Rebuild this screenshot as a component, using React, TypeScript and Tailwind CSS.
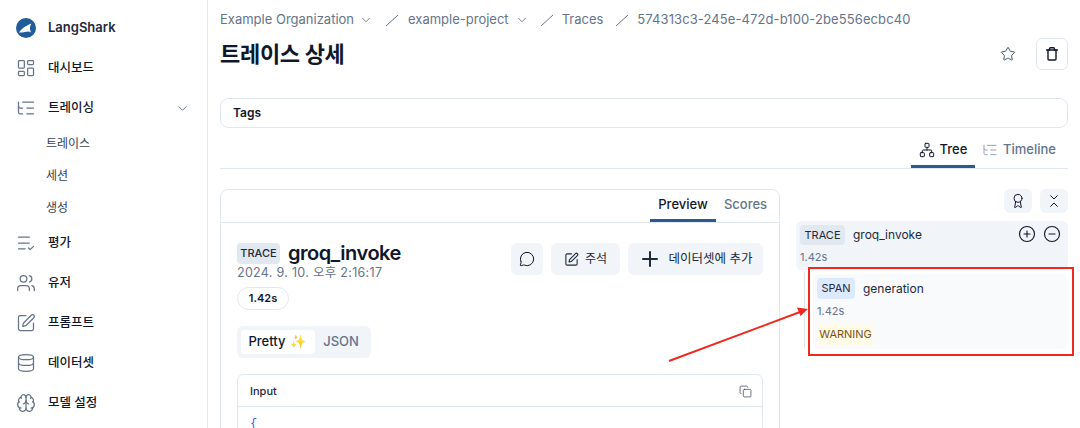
import { ChevronDown, LayoutDashboard, ListTree, ListCheck, Users, SquarePen, Database, Brain, Star, Network, Award, ChevronsDownUp, MessageCircle, Plus, Copy, CirclePlus, CircleMinus } from "lucide-react";

const font = { fontFamily: 'Inter, "Noto Sans CJK KR", sans-serif' };

function NavRow({ icon: Icon, label, right }: { icon: any; label: string; right?: boolean }) {
  return (
    <div className="h-10 flex items-center pl-4 pr-[17px] gap-3 text-[12.5px] font-medium text-[#0f172a]">
      <Icon size={20} strokeWidth={1.5} className="text-[#64748b] shrink-0" />
      <span className="flex-1">{label}</span>
      {right && <ChevronDown size={15} strokeWidth={1.5} className="text-[#64748b]" />}
    </div>
  );
}

function SubRow({ label }: { label: string }) {
  return <div className="h-8 flex items-center pl-[46px] text-xs text-[#334155]">{label}</div>;
}

function Sep() {
  return (
    <svg width="16" height="16" viewBox="0 0 16 16" className="text-[#64748b] shrink-0">
      <path d="M2 14 L14 3" stroke="currentColor" strokeWidth="1" />
    </svg>
  );
}

function Trash2Plain() {
  return (
    <svg width="16" height="16" viewBox="0 0 16 16" fill="none" stroke="#0f172a" strokeWidth="1.4" strokeLinecap="round" strokeLinejoin="round">
      <path d="M2.5 4 H13.5" />
      <path d="M4 4 V13 A1 1 0 0 0 5 14 H11 A1 1 0 0 0 12 13 V4" />
      <path d="M5.5 4 V2.7 A1 1 0 0 1 6.5 1.7 H9.5 A1 1 0 0 1 10.5 2.7 V4" />
    </svg>
  );
}

export default function App() {
  return (
    <div style={font} className="relative w-[1080px] h-[428px] overflow-hidden bg-white flex text-[#0f172a]">
      <aside className="w-[208px] shrink-0 border-r border-[#e2e8f0] pt-2">
        <div className="h-10 flex items-center pl-4 gap-3">
          <svg width="20" height="20" viewBox="0 0 20 20" className="shrink-0">
            <circle cx="10" cy="10" r="10" fill="#1f5c99" />
            <path d="M3 14.5 C5.5 11 8 8.5 15.5 5.5 C13.5 8 13.5 11 15 14.5 C13 13 11 13.5 9 14 C7 14.5 5 14.5 3 14.5 Z" fill="#ffffff" />
          </svg>
          <span className="text-[13px] font-semibold text-[#1e293b]">LangShark</span>
        </div>
        <NavRow icon={LayoutDashboard} label="대시보드" />
        <NavRow icon={ListTree} label="트레이싱" right />
        <SubRow label="트레이스" />
        <SubRow label="세션" />
        <SubRow label="생성" />
        <div className="mt-[-1px]">
          <NavRow icon={ListCheck} label="평가" />
          <NavRow icon={Users} label="유저" />
          <NavRow icon={SquarePen} label="프롬프트" />
          <NavRow icon={Database} label="데이터셋" />
          <NavRow icon={Brain} label="모델 설정" />
        </div>
      </aside>

      <main className="flex-1 min-w-0 pl-3 pr-3">
        <div className="h-[38px] flex items-center pt-[1px] text-[13px] text-[#64748b] whitespace-nowrap">
          <span>Example Organization</span>
          <ChevronDown size={14} strokeWidth={1.5} className="ml-[5px]" />
          <span className="ml-[11px]"><Sep /></span>
          <span className="ml-[8px]">example-project</span>
          <ChevronDown size={14} strokeWidth={1.5} className="ml-[6px]" />
          <span className="ml-[10px]"><Sep /></span>
          <span className="ml-[7px]">Traces</span>
          <span className="ml-[11px]"><Sep /></span>
          <span className="ml-[7px] tracking-[0.1px]">574313c3-245e-472d-b100-2be556ecbc40</span>
        </div>
        <div className="h-8 flex items-center justify-between">
          <h1 className="text-[22px] font-bold tracking-[-0.3px] text-[#0f172a]">트레이스 상세</h1>
          <div className="flex items-center gap-5">
            <Star size={16} strokeWidth={1.5} className="text-[#475569]" />
            <div className="w-8 h-8 border border-[#e2e8f0] rounded-md flex items-center justify-center">
              <Trash2Plain />
            </div>
          </div>
        </div>
        <div className="mt-7 h-[30px] border border-[#e2e8f0] rounded-lg flex items-center pl-3 text-xs font-semibold text-[#0f172a]">Tags</div>
        <div className="h-[41px] border-b border-[#e2e8f0] flex justify-end pr-[5px]">
          <div className="h-[40px] w-16 border-b-[3px] border-[#2c5a8f] flex items-center justify-center gap-[5px] text-[13px] font-medium text-[#0f172a] pt-[7px]">
            <Network size={16} strokeWidth={1.5} />
            <span>Tree</span>
          </div>
          <div className="h-[40px] w-[88px] flex items-center justify-center gap-[5px] text-[13px] font-medium text-[#64748b] pt-[7px] pb-[3px]">
            <ListTree size={16} strokeWidth={1.5} className="text-[#94a3b8]" />
            <span>Timeline</span>
          </div>
        </div>

        <div className="mt-5 flex gap-4">
          <section className="w-[560px] h-[300px] shrink-0 border border-[#e2e8f0] rounded-t-lg">
            <div className="h-[33px] border-b border-[#e2e8f0] flex justify-end pr-[4px] text-[13px] font-medium">
              <div className="w-[66px] h-[32px] border-b-[3px] border-[#2c5a8f] flex items-center justify-center text-[#0f172a]">Preview</div>
              <div className="w-[59px] h-[32px] pb-[3px] flex items-center justify-center text-[#64748b]">Scores</div>
            </div>
            <div className="px-4 pt-5">
              <div className="flex justify-between">
                <div>
                  <div className="flex items-center gap-[8px] h-[20px]">
                    <span className="h-[21px] px-1 w-[43px] rounded bg-[#e2e8f0] flex items-center justify-center text-[11px] text-[#1e293b] font-medium">TRACE</span>
                    <span className="text-[20px] font-semibold tracking-[-0.45px] leading-none text-[#0f172a]">groq_invoke</span>
                  </div>
                  <div className="mt-[2px] h-[16px] flex items-center text-[12.5px] text-[#64748b] tracking-[0.3px]">2024. 9. 10. 오후 2:16:17</div>
                  <div className="mt-[6px] w-[52px] h-[23px] border border-[#e2e8f0] rounded-full flex items-center justify-center text-[11px] font-semibold text-[#0f172a]">1.42s</div>
                </div>
                <div className="flex items-start gap-2">
                  <div className="w-8 h-8 rounded-md bg-[#f1f5f9] flex items-center justify-center">
                    <MessageCircle size={16} strokeWidth={1.5} />
                  </div>
                  <div className="w-[69px] h-8 rounded-md bg-[#f1f5f9] flex items-center justify-center gap-[6px] text-xs text-[#1e293b]">
                    <SquarePen size={15} strokeWidth={1.75} />
                    <span>주석</span>
                  </div>
                  <div className="w-[135px] h-8 rounded-md bg-[#f1f5f9] flex items-center justify-center gap-[6px] text-[12.5px] text-[#1e293b]">
                    <Plus size={24} strokeWidth={2} />
                    <span>데이터셋에 추가</span>
                  </div>
                </div>
              </div>
              <div className="mt-4 w-[134px] h-8 rounded-md bg-[#f1f5f9] p-1 flex items-center text-[13px] font-medium">
                <div className="w-[74px] h-6 rounded bg-white flex items-center justify-center gap-1 pr-[2px] text-[#0f172a]">Pretty <span>✨</span></div>
                <div className="flex-1 flex items-center justify-center text-[#64748b]">JSON</div>
              </div>
              <div className="mt-4 border border-[#e2e8f0] rounded-t-md h-[80px]">
                <div className="h-8 pt-[1px] border-b border-[#e2e8f0] flex items-center justify-between pl-3 pr-[10px] text-[11px] font-medium text-[#1e293b]">
                  <span>Input</span>
                  <Copy size={13} strokeWidth={1.5} className="text-[#475569]" />
                </div>
                <div className="pl-3 pt-[9px] text-xs font-mono text-[#2563eb] leading-4">{"{"}</div>
              </div>
            </div>
          </section>

          <section className="flex-1 min-w-0">
            <div className="flex justify-end gap-2">
              <div className="w-7 h-6 rounded-md bg-[#f1f5f9] flex items-center justify-center">
                <Award size={16} strokeWidth={1.5} />
              </div>
              <div className="w-7 h-6 rounded-md bg-[#f1f5f9] flex items-center justify-center">
                <ChevronsDownUp size={16} strokeWidth={1.5} />
              </div>
            </div>
            <div className="mt-2 h-[49px] rounded-md bg-[#f1f5f9] pl-1 pr-[7px] pt-1">
              <div className="flex items-center gap-2 h-5">
                <span className="w-[45px] h-5 rounded bg-[#e2e8f0] flex items-center justify-center text-[11px] text-[#1e293b]">TRACE</span>
                <span className="flex-1 text-xs text-[#1e293b]">groq_invoke</span>
                <CirclePlus size={18} strokeWidth={1.5} className="-mt-[2px]" />
                <CircleMinus size={18} strokeWidth={1.5} className="-mt-[2px] -ml-px" />
              </div>
              <div className="mt-1 text-[11px] leading-4 text-[#64748b]">1.42s</div>
            </div>
            <div className="flex pl-2 mt-[1px]">
              <div className="w-[1px] bg-[#e2e8f0]" />
              <div className="ml-2 mt-[3px] flex-1 h-[75px] rounded-md bg-[#f8fafc] pl-1 pt-1">
                <div className="flex items-center gap-2 h-[21px]">
                  <span className="w-[38px] h-[21px] rounded bg-[#dbeafe] flex items-center justify-center text-[11px] text-[#1e293b]">SPAN</span>
                  <span className="text-xs text-[#1e293b]">generation</span>
                </div>
                <div className="mt-1 text-[11px] leading-4 text-[#64748b]">1.42s</div>
                <div className="mt-[5px] w-[57px] h-[21px] rounded bg-[#fefce8] flex items-center justify-center text-[11px] text-[#854d0e]">WARNING</div>
              </div>
            </div>
          </section>
        </div>
      </main>

      <div className="absolute left-[808px] top-[267px] w-[266px] h-[89px] border-2 border-[#ee2a1f]" />
      <svg className="absolute left-0 top-0 pointer-events-none" width="1080" height="428">
        <line x1="669" y1="361" x2="800" y2="312" stroke="#ee2a1f" strokeWidth="2" />
        <polygon points="808,309 797,307.5 800.5,316" fill="#ee2a1f" />
      </svg>
    </div>
  );
}
